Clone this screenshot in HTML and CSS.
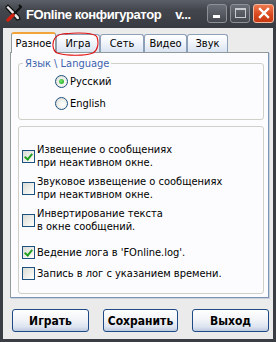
FILE: index.html
```html
<!DOCTYPE html>
<html lang="ru">
<head>
<meta charset="utf-8">
<title>FOnline конфигуратор</title>
<link rel="stylesheet" href="styles.css">
</head>
<body>
<div class="window">
  <div class="titlebar">
    <svg class="app-icon" width="18" height="18" viewBox="0 0 18 18">
      <path d="M2 3 L4 1 L6 3 L15 12 L16 15 L13 16 L4 6 L2 4 Z" fill="#e8e8e8" stroke="#111" stroke-width="1.2"/>
      <path d="M15 1 L17 3 L9 11" fill="none" stroke="#111" stroke-width="2.2"/>
      <path d="M9 11 L4 16" stroke="#d02010" stroke-width="3.4" stroke-linecap="round"/>
    </svg>
    <span class="title">FOnline конфигуратор<span class="title-tail">v...</span></span>
    <div class="caption-btns">
      <span class="cbtn"><span class="glyph-min"></span></span>
      <span class="cbtn"><span class="glyph-max"></span></span>
      <span class="cbtn cbtn--close">
        <svg width="12" height="12" viewBox="0 0 12 12"><path d="M2 2 L10 10 M10 2 L2 10" stroke="#fff" stroke-width="2.4" stroke-linecap="square"/></svg>
      </span>
    </div>
  </div>
  <div class="client">
    <div class="tabs">
      <div class="tab tab--active tab--w45">Разное</div>
      <div class="tab tab--w44">Игра</div>
      <div class="tab tab--w44">Сеть</div>
      <div class="tab tab--w43">Видео</div>
      <div class="tab tab--w41">Звук</div>
    </div>
    <div class="panel">
      <fieldset class="group group--lang">
        <legend class="legend">Язык \ Language</legend>
        <label class="radio-row"><span class="radio radio--on"></span>Русский</label>
        <label class="radio-row"><span class="radio"></span>English</label>
      </fieldset>
      <div class="group group--opts">
        <label class="item"><span class="check check--on"></span><span class="item-text">Извещение о сообщениях<br>при неактивном окне.</span></label>
        <label class="item"><span class="check"></span><span class="item-text">Звуковое извещение о сообщениях<br>при неактивном окне.</span></label>
        <label class="item"><span class="check"></span><span class="item-text">Инвертирование текста<br>в окне сообщений.</span></label>
        <label class="item item--far"><span class="check check--on"></span><span class="item-text">Ведение лога в 'FOnline.log'.</span></label>
        <label class="item item--near"><span class="check"></span><span class="item-text">Запись в лог с указанием времени.</span></label>
      </div>
    </div>
    <div class="buttons">
      <button class="btn btn--w77">Играть</button>
      <button class="btn btn--w75">Сохранить</button>
      <button class="btn btn--w77">Выход</button>
    </div>
  </div>
  <svg class="annotation" width="60" height="30" viewBox="0 0 60 30">
    <path d="M14 2 C28 0 44 1 46 5 C48 11 47 18 42 21 C34 24 16 24 6 21 C1 18 1 10 4 6 C6 3 10 1.5 17 1.5" fill="none" stroke="#e01010" stroke-width="1.1"/>
  </svg>
</div>
</body>
</html>
```
FILE: styles.css
```css
* { box-sizing: border-box; }
html, body { margin: 0; padding: 0; }
body {
  width: 276px;
  height: 342px;
  overflow: hidden;
  font-family: "DejaVu Sans Condensed", "DejaVu Sans", sans-serif;
  font-size: 11px;
  color: #000;
}
.window {
  position: relative;
  width: 276px;
  height: 342px;
  background: #3a3d44;
  display: flex;
  flex-direction: column;
}
.titlebar {
  height: 28px;
  flex: none;
  display: flex;
  align-items: center;
  padding: 0 2px 2px 4px;
  background: linear-gradient(#5c6068 0%, #43464d 35%, #383b41 100%);
}
.app-icon { flex: none; margin-right: 4px; }
.title {
  flex: 1;
  color: #fff;
  font-family: "Liberation Sans", Arial, sans-serif;
  font-weight: bold;
  font-size: 13px;
  letter-spacing: -0.4px;
  white-space: nowrap;
  padding-top: 2px;
}
.title-tail { margin-left: 14px; }
.caption-btns { display: flex; gap: 3px; align-items: center; }
.cbtn {
  width: 20px;
  height: 19px;
  border: 1px solid #8d9097;
  border-radius: 3px;
  background: linear-gradient(#6a6e76, #45484f);
  display: flex;
  align-items: center;
  justify-content: center;
  position: relative;
}
.glyph-min {
  position: absolute;
  left: 5px;
  bottom: 4px;
  width: 7px;
  height: 3px;
  background: #fff;
}
.glyph-max {
  width: 11px;
  height: 10px;
  border: 1px solid #c8cad0;
  border-top-width: 2px;
}
.cbtn--close {
  width: 21px;
  border-color: #f3b8a0;
  background: linear-gradient(#f07a4e, #d8461c 60%, #c73a12);
}
.client {
  flex: 1;
  margin: 0 3px 3px 3px;
  background: #ebebeb;
  padding: 4px 4px 0 7px;
  display: flex;
  flex-direction: column;
}
.tabs {
  display: flex;
  height: 21px;
  margin-bottom: -1px;
  padding-left: 1px;
  position: relative;
  z-index: 1;
}
.tab {
  height: 18px;
  margin-top: 2px;
  border: 1px solid #8ea0b8;
  border-bottom: none;
  border-radius: 3px 3px 0 0;
  background: linear-gradient(#ffffff, #f1f5fb 45%, #d9e3f1);
  text-align: center;
  line-height: 17px;
  white-space: nowrap;
}
.tab--active {
  height: 21px;
  margin-top: 0;
  border-color: #919b9c;
  border-top: 2px solid #f2a33a;
  background: #fcfcfe;
  line-height: 19px;
}
.tab--w45 { width: 45px; }
.tab--w44 { width: 44px; }
.tab--w43 { width: 43px; }
.tab--w41 { width: 41px; }
.panel {
  height: 246px;
  border: 1px solid #919b9c;
  border-right-color: #7c94b6;
  border-bottom-color: #7c94b6;
  box-shadow: 1px 1px 0 #c9d0da;
  background: #fcfcfe;
  padding: 4px 4px 3px 7px;
  display: flex;
  flex-direction: column;
}
.group {
  border: 1px solid #d0d0c8;
  border-radius: 3px;
  margin: 0;
}
.group--lang {
  padding: 4px 0 8px 0;
  min-inline-size: 0;
}
.legend {
  color: #3d63ad;
  line-height: 13px;
  padding: 0 2px;
  margin-left: 4px;
}
.radio-row {
  display: flex;
  align-items: center;
  height: 15px;
  margin-left: 36px;
}
.radio-row + .radio-row { margin-top: 7px; }
.radio {
  width: 13px;
  height: 13px;
  margin-right: 2px;
  border: 1px solid #1c5180;
  border-radius: 50%;
  background: radial-gradient(circle at 60% 60%, #ffffff 0%, #f2f2ee 40%, #d6d6ce 100%);
  display: flex;
  align-items: center;
  justify-content: center;
}
.radio--on::after {
  content: "";
  width: 5px;
  height: 5px;
  border-radius: 50%;
  background: radial-gradient(circle at 40% 40%, #6ee86e, #1a9c1a);
}
.group--opts {
  margin-top: 6px;
  flex: 1;
  padding: 16px 0 0 3px;
  display: flex;
  flex-direction: column;
  gap: 6px;
}
.item {
  display: flex;
  align-items: center;
  line-height: 13px;
}
.item--far { margin-top: 7px; }
.item--near { margin-top: 2px; }
.check {
  flex: none;
  width: 13px;
  height: 13px;
  margin-right: 2px;
  border: 1px solid #1c5180;
  background: linear-gradient(135deg, #dcdcd6, #f4f4f0 70%, #ffffff);
  position: relative;
}
.check--on::after {
  content: "";
  position: absolute;
  left: 3px;
  top: 1px;
  width: 3px;
  height: 6px;
  border: solid #21a121;
  border-width: 0 2px 2px 0;
  transform: rotate(40deg);
}
.item-text { white-space: nowrap; }
.buttons {
  margin-top: 11px;
  padding-left: 2px;
  display: flex;
  justify-content: space-between;
}
.btn {
  height: 23px;
  border: 1px solid #1e4a86;
  border-radius: 3px;
  background: linear-gradient(#ffffff, #f2f4f8 45%, #dde4f0 80%, #bccadf);
  font-family: "DejaVu Sans Condensed", "DejaVu Sans", sans-serif;
  font-weight: bold;
  font-size: 12px;
  color: #000;
  padding: 0;
}
.btn--w77 { width: 77px; }
.btn--w75 { width: 75px; }
.annotation {
  position: absolute;
  left: 51px;
  top: 32px;
  z-index: 3;
}
```
